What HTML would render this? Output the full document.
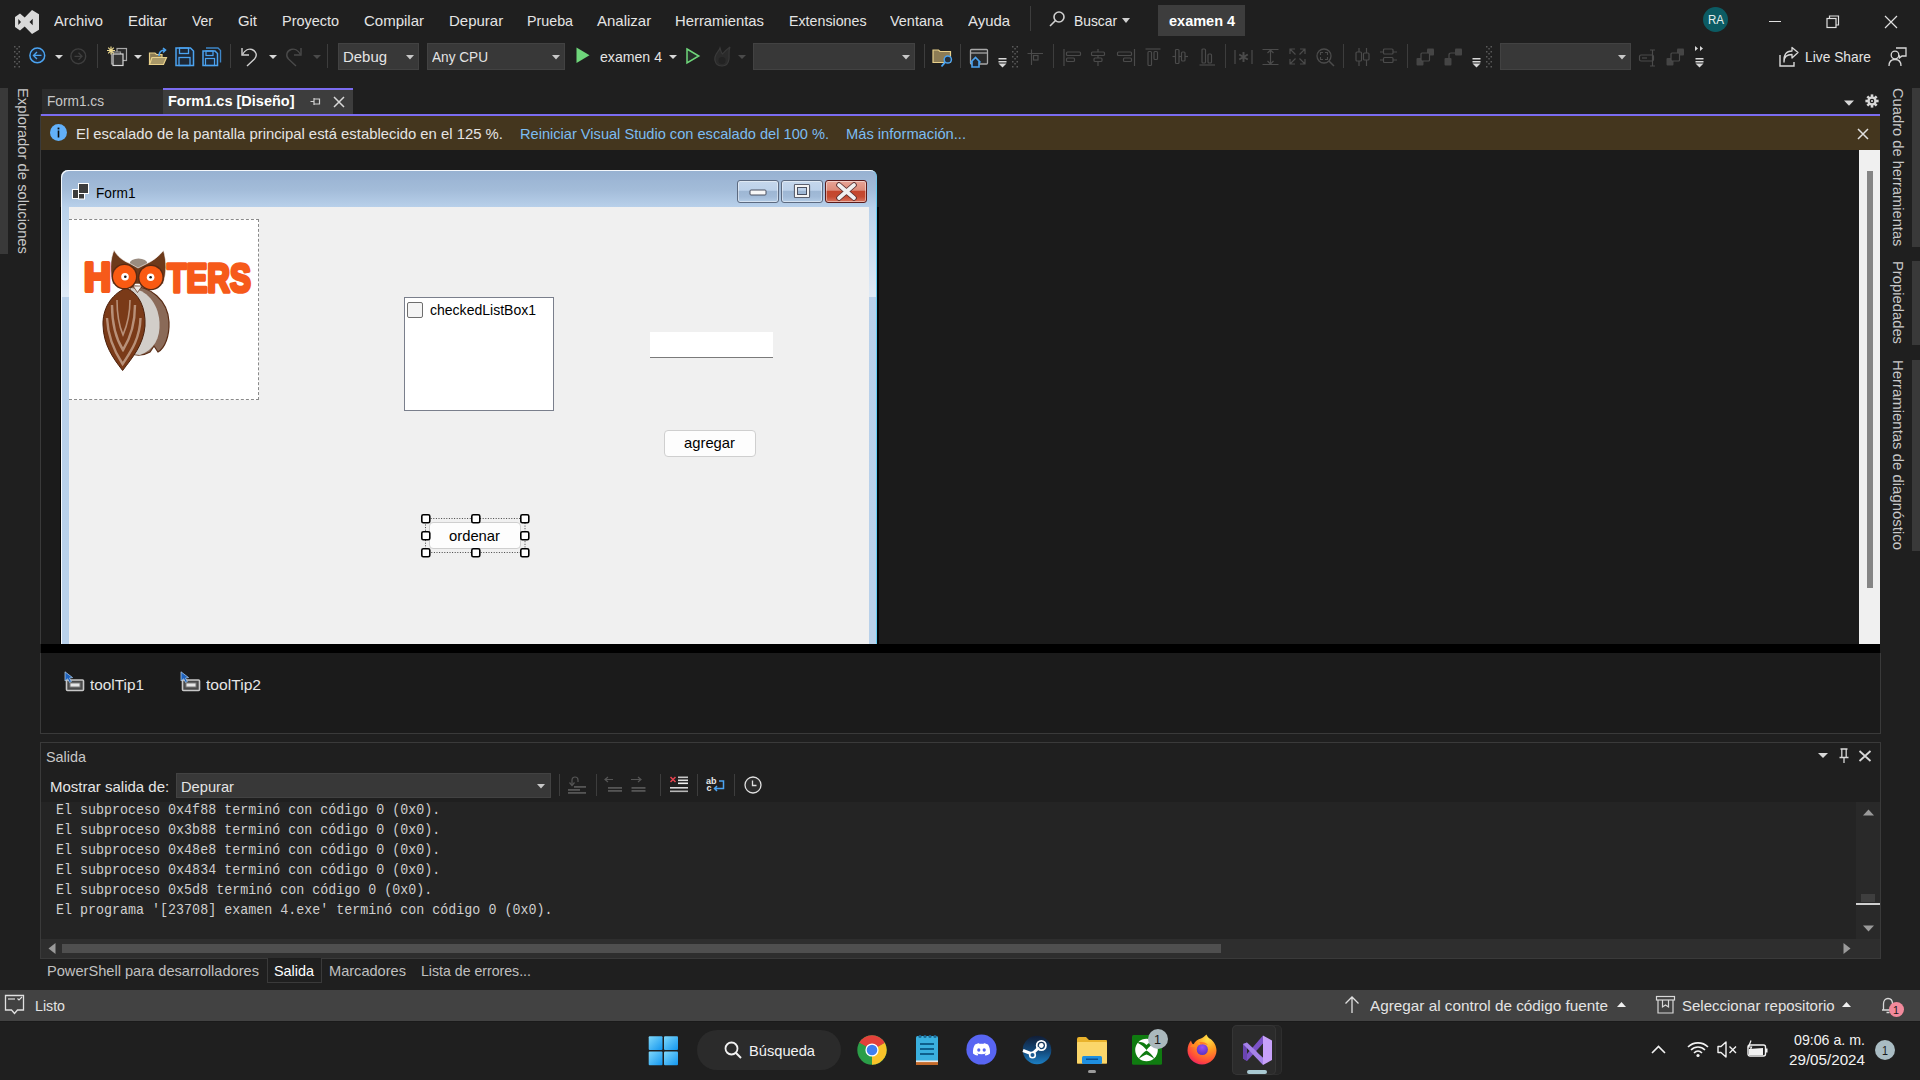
<!DOCTYPE html>
<html><head><meta charset="utf-8"><title>Visual Studio</title>
<style>
html,body{margin:0;padding:0;}
body{width:1920px;height:1080px;overflow:hidden;position:relative;background:#1f1f1f;font-family:"Liberation Sans", sans-serif;}
.t{position:absolute;white-space:pre;transform-origin:0 50%;}
.r{position:absolute;}
.s{position:absolute;overflow:visible;}
</style></head><body>

<svg class="s" style="left:14px;top:9px;" width="26" height="26" viewBox="0 0 26 26"><path d="M1 8 L6 4.5 L10.7 8.5 L18 1 L25 5.2 L25 20.7 L18 25 L10.7 17.6 L6 21.5 L1 18 Z M4.3 10 L7 13 L4.3 16 Z M18.7 9.8 L15.5 13 L18.7 16.2 Z" fill="#d9d9d9" fill-rule="evenodd"/></svg>
<div class="t" style="left:54.00px;top:10.80px;font-size:15.00px;line-height:20px;color:#e4e4e4;transform:scaleX(0.9797);">Archivo</div>
<div class="t" style="left:128.00px;top:10.80px;font-size:15.00px;line-height:20px;color:#e4e4e4;transform:scaleX(0.9952);">Editar</div>
<div class="t" style="left:192.00px;top:10.80px;font-size:15.00px;line-height:20px;color:#e4e4e4;transform:scaleX(0.9327);">Ver</div>
<div class="t" style="left:238.00px;top:10.80px;font-size:15.00px;line-height:20px;color:#e4e4e4;transform:scaleX(0.9910);">Git</div>
<div class="t" style="left:282.00px;top:10.80px;font-size:15.00px;line-height:20px;color:#e4e4e4;transform:scaleX(0.9628);">Proyecto</div>
<div class="t" style="left:364.00px;top:10.80px;font-size:15.00px;line-height:20px;color:#e4e4e4;">Compilar</div>
<div class="t" style="left:449.00px;top:10.80px;font-size:15.00px;line-height:20px;color:#e4e4e4;">Depurar</div>
<div class="t" style="left:527.00px;top:10.80px;font-size:15.00px;line-height:20px;color:#e4e4e4;transform:scaleX(0.9509);">Prueba</div>
<div class="t" style="left:597.00px;top:10.80px;font-size:15.00px;line-height:20px;color:#e4e4e4;">Analizar</div>
<div class="t" style="left:675.00px;top:10.80px;font-size:15.00px;line-height:20px;color:#e4e4e4;transform:scaleX(0.9884);">Herramientas</div>
<div class="t" style="left:789.00px;top:10.80px;font-size:15.00px;line-height:20px;color:#e4e4e4;transform:scaleX(0.9484);">Extensiones</div>
<div class="t" style="left:890.00px;top:10.80px;font-size:15.00px;line-height:20px;color:#e4e4e4;transform:scaleX(0.9625);">Ventana</div>
<div class="t" style="left:968.00px;top:10.80px;font-size:15.00px;line-height:20px;color:#e4e4e4;transform:scaleX(0.9937);">Ayuda</div>
<div class="r" style="left:1030px;top:6px;width:1px;height:25px;background:#3d3d3d;"></div>
<svg class="s" style="left:1049px;top:11px;" width="17" height="16" viewBox="0 0 17 16"><circle cx="10" cy="6" r="5" fill="none" stroke="#d0d0d0" stroke-width="1.6"/><path d="M6.5 9.5 L1 15" stroke="#d0d0d0" stroke-width="1.6"/></svg>
<div class="t" style="left:1074.00px;top:10.80px;font-size:15.00px;line-height:20px;color:#e8e8e8;transform:scaleX(0.9210);">Buscar</div>
<svg class="s" style="left:1122px;top:18px;" width="8" height="5" viewBox="0 0 8 5"><path d="M0 0 H8 L4 5 Z" fill="#d0d0d0"/></svg>
<div class="r" style="left:1158px;top:5px;width:87px;height:31px;background:#3d3d3d;"></div>
<div class="t" style="left:1169.00px;top:12.48px;font-size:14.50px;line-height:19px;color:#ffffff;font-weight:bold;">examen 4</div>
<div class="r" style="left:1703px;top:7px;width:25px;height:25px;border-radius:50%;background:#0c5b63;"></div>
<div class="t" style="left:1708.00px;top:11.84px;font-size:12.00px;line-height:16px;color:#e6f0f0;transform:scaleX(0.9597);">RA</div>
<div class="r" style="left:1769px;top:21px;width:12px;height:1px;background:#e0e0e0;"></div>
<svg class="s" style="left:1826px;top:15px;" width="14" height="14" viewBox="0 0 14 14"><rect x="1" y="3.5" width="9" height="9" fill="none" stroke="#e0e0e0" stroke-width="1.2"/><path d="M3.5 3.5 V1 H12.5 V10 H10" fill="none" stroke="#e0e0e0" stroke-width="1.2"/></svg>
<svg class="s" style="left:1884px;top:15px;" width="14" height="14" viewBox="0 0 14 14"><path d="M1 1 L13 13 M13 1 L1 13" stroke="#e0e0e0" stroke-width="1.2"/></svg>
<svg class="s" style="left:14px;top:46px;" width="7" height="22" viewBox="0 0 7 22"><rect x="0" y="0" width="1.5" height="1.5" fill="#5a5a5a"/><rect x="4.5" y="0" width="1.5" height="1.5" fill="#5a5a5a"/><rect x="2.3" y="2" width="1.5" height="1.5" fill="#5a5a5a"/><rect x="0" y="5" width="1.5" height="1.5" fill="#5a5a5a"/><rect x="4.5" y="5" width="1.5" height="1.5" fill="#5a5a5a"/><rect x="2.3" y="7" width="1.5" height="1.5" fill="#5a5a5a"/><rect x="0" y="10" width="1.5" height="1.5" fill="#5a5a5a"/><rect x="4.5" y="10" width="1.5" height="1.5" fill="#5a5a5a"/><rect x="2.3" y="12" width="1.5" height="1.5" fill="#5a5a5a"/><rect x="0" y="15" width="1.5" height="1.5" fill="#5a5a5a"/><rect x="4.5" y="15" width="1.5" height="1.5" fill="#5a5a5a"/><rect x="2.3" y="17" width="1.5" height="1.5" fill="#5a5a5a"/><rect x="0" y="20" width="1.5" height="1.5" fill="#5a5a5a"/><rect x="4.5" y="20" width="1.5" height="1.5" fill="#5a5a5a"/></svg>
<svg class="s" style="left:29px;top:47px;" width="17" height="17" viewBox="0 0 17 17"><circle cx="8.3" cy="8.4" r="7.4" fill="#1d2735" stroke="#4ba3f0" stroke-width="1.5"/><path d="M12.5 8.4 H4.5 M8 4.9 L4.5 8.4 L8 11.9" fill="none" stroke="#4ba3f0" stroke-width="1.4"/></svg>
<svg class="s" style="left:55px;top:55px;" width="8" height="4" viewBox="0 0 8 4"><path d="M0 0 H8 L4 4 Z" fill="#d8d8d8"/></svg>
<svg class="s" style="left:70px;top:48px;" width="17" height="17" viewBox="0 0 17 17"><circle cx="8.3" cy="8.3" r="7.4" fill="none" stroke="#3e3e3e" stroke-width="1.4"/><path d="M4.5 8.3 H12 M8.5 4.8 L12 8.3 L8.5 11.8" fill="none" stroke="#3e3e3e" stroke-width="1.3"/></svg>
<div class="r" style="left:97px;top:44px;width:1px;height:24px;background:#3d3d3d;"></div>
<svg class="s" style="left:106px;top:46px;" width="22" height="21" viewBox="0 0 22 21"><rect x="11" y="2.5" width="9.5" height="12" fill="#2a2a2a" stroke="#a8a8a8" stroke-width="1.2"/><rect x="5.5" y="6" width="9" height="12" fill="#2a2a2a" stroke="#909090" stroke-width="1.2"/><rect x="7" y="8" width="10" height="11.5" fill="#333" stroke="#d8d8d8" stroke-width="1.2"/><path d="M5 0.5 V8.5 M1 4.5 H9 M2.2 1.7 L7.8 7.3 M7.8 1.7 L2.2 7.3" stroke="#ecd98f" stroke-width="1.2"/></svg>
<svg class="s" style="left:134px;top:55px;" width="8" height="4" viewBox="0 0 8 4"><path d="M0 0 H8 L4 4 Z" fill="#d8d8d8"/></svg>
<svg class="s" style="left:148px;top:47px;" width="20" height="19" viewBox="0 0 20 19"><path d="M1.5 6 H7 L8.5 7.5 H14 V17.5 H1.5 Z" fill="#8c7c55" stroke="#e8d08a" stroke-width="1.2"/><path d="M1.5 17.5 L4 10.5 H18.5 L15.5 17.5 Z" fill="#a99868" stroke="#e8d08a" stroke-width="1.2"/><path d="M11 9 C11 5 13 3 17 3 M15 1 L17.5 3 L15 5.5" fill="none" stroke="#4ba3f0" stroke-width="1.6"/></svg>
<svg class="s" style="left:175px;top:47px;" width="20" height="20" viewBox="0 0 20 20"><path d="M1 1 H15.5 L18.5 4 V18.5 H1 Z" fill="#1d2735" stroke="#4ba3f0" stroke-width="1.5"/><rect x="4.5" y="1" width="9" height="5.5" fill="none" stroke="#4ba3f0" stroke-width="1.3"/><rect x="4" y="10.5" width="11" height="8" fill="none" stroke="#4ba3f0" stroke-width="1.3"/></svg>
<svg class="s" style="left:202px;top:47px;" width="20" height="20" viewBox="0 0 20 20"><path d="M4 1 H16 L18.5 3.5 V15.5" fill="none" stroke="#3e86c8" stroke-width="1.4"/><path d="M1 4 H13 L15.5 6.5 V18.5 H1 Z" fill="#1d2735" stroke="#4ba3f0" stroke-width="1.5"/><rect x="4" y="4" width="7" height="4.5" fill="none" stroke="#4ba3f0" stroke-width="1.2"/><rect x="3.5" y="11.5" width="9" height="7" fill="none" stroke="#4ba3f0" stroke-width="1.2"/></svg>
<div class="r" style="left:230px;top:44px;width:1px;height:24px;background:#3d3d3d;"></div>
<svg class="s" style="left:240px;top:46px;" width="18" height="20" viewBox="0 0 18 20"><path d="M2 2 V9 H9" fill="none" stroke="#d0d0d0" stroke-width="1.4"/><path d="M2.5 8.5 C5 4 9 2.5 12 3.5 C16.5 5 17.5 10 14.5 13 L7 20" fill="none" stroke="#d0d0d0" stroke-width="1.4"/></svg>
<svg class="s" style="left:269px;top:55px;" width="8" height="4" viewBox="0 0 8 4"><path d="M0 0 H8 L4 4 Z" fill="#d8d8d8"/></svg>
<svg class="s" style="left:285px;top:46px;" width="18" height="20" viewBox="0 0 18 20"><path d="M16 2 V9 H9" fill="none" stroke="#4a4a4a" stroke-width="1.4"/><path d="M15.5 8.5 C13 4 9 2.5 6 3.5 C1.5 5 0.5 10 3.5 13 L11 20" fill="none" stroke="#4a4a4a" stroke-width="1.4"/></svg>
<svg class="s" style="left:313px;top:55px;" width="8" height="4" viewBox="0 0 8 4"><path d="M0 0 H8 L4 4 Z" fill="#4a4a4a"/></svg>
<div class="r" style="left:327px;top:44px;width:1px;height:24px;background:#3d3d3d;"></div>
<div class="r" style="left:338px;top:43px;width:81px;height:27px;background:#383838;box-sizing:border-box;border:1px solid #424242;"></div>
<div class="t" style="left:343.00px;top:46.80px;font-size:15.00px;line-height:20px;color:#e4e4e4;transform:scaleX(0.9954);">Debug</div>
<svg class="s" style="left:406px;top:54.5px;" width="8" height="4.5" viewBox="0 0 8 4.5"><path d="M0 0 H8 L4 4.5 Z" fill="#c8c8c8"/></svg>
<div class="r" style="left:427px;top:43px;width:138px;height:27px;background:#383838;box-sizing:border-box;border:1px solid #424242;"></div>
<div class="t" style="left:432.00px;top:46.80px;font-size:15.00px;line-height:20px;color:#e4e4e4;transform:scaleX(0.9080);">Any CPU</div>
<svg class="s" style="left:552px;top:54.5px;" width="8" height="4.5" viewBox="0 0 8 4.5"><path d="M0 0 H8 L4 4.5 Z" fill="#c8c8c8"/></svg>
<svg class="s" style="left:576px;top:47px;" width="14" height="17" viewBox="0 0 14 17"><path d="M0.5 0.5 L13.5 8.2 L0.5 16 Z" fill="#6fd67b"/></svg>
<div class="t" style="left:600.00px;top:46.80px;font-size:15.00px;line-height:20px;color:#e4e4e4;transform:scaleX(0.9410);">examen 4</div>
<svg class="s" style="left:669px;top:55px;" width="8" height="4" viewBox="0 0 8 4"><path d="M0 0 H8 L4 4 Z" fill="#d8d8d8"/></svg>
<svg class="s" style="left:686px;top:48px;" width="14" height="17" viewBox="0 0 14 17"><path d="M1 1 L12.8 8 L1 15 Z" fill="#25302a" stroke="#6fd67b" stroke-width="1.5"/></svg>
<svg class="s" style="left:713px;top:46px;" width="18" height="21" viewBox="0 0 18 21"><path d="M9 20 C3 20 1 15 2 11 C3 7 6 5 7 2 C8 5 8 7 9.5 8 C11 6 13 4 17 1 C15 5 16.5 9 16 13 C15.5 17 13 20 9 20 Z" fill="#2b2b2b" stroke="#393939" stroke-width="1.2"/><circle cx="9" cy="14.5" r="3.5" fill="#232323"/></svg>
<svg class="s" style="left:738px;top:55px;" width="8" height="4" viewBox="0 0 8 4"><path d="M0 0 H8 L4 4 Z" fill="#4a4a4a"/></svg>
<div class="r" style="left:753px;top:43px;width:162px;height:27px;background:#383838;box-sizing:border-box;border:1px solid #424242;"></div>
<svg class="s" style="left:902px;top:54.5px;" width="8" height="4.5" viewBox="0 0 8 4.5"><path d="M0 0 H8 L4 4.5 Z" fill="#c8c8c8"/></svg>
<div class="r" style="left:924px;top:44px;width:1px;height:24px;background:#3d3d3d;"></div>
<svg class="s" style="left:932px;top:48px;" width="22" height="20" viewBox="0 0 22 20"><path d="M1 2 H6.5 L8 3.5 H18.5 V14.5 H1 Z" fill="#8c7c55" stroke="#e8d08a" stroke-width="1.2"/><circle cx="15.8" cy="11.5" r="3.6" fill="#23303d" stroke="#4ba3f0" stroke-width="1.5"/><path d="M13.2 14.2 L9.5 18.5" stroke="#4ba3f0" stroke-width="1.8"/></svg>
<div class="r" style="left:960px;top:44px;width:1px;height:24px;background:#3d3d3d;"></div>
<svg class="s" style="left:969px;top:48px;" width="21" height="20" viewBox="0 0 21 20"><rect x="1.5" y="1.5" width="17" height="14.5" rx="1" fill="#2a2a2a" stroke="#a8a8a8" stroke-width="1.3"/><path d="M1.5 5 H18.5" stroke="#a8a8a8" stroke-width="1.3"/><path d="M1.5 14.5 L6.5 9.5 L11.5 14.5 M3 13.5 V19 H10 V13.5" fill="#1d2735" stroke="#4ba3f0" stroke-width="1.6"/></svg>
<svg class="s" style="left:998px;top:58px;" width="10" height="10" viewBox="0 0 10 10"><rect x="0.5" y="0" width="8" height="1.5" fill="#d8d8d8"/><rect x="0.5" y="3" width="8" height="1.5" fill="#d8d8d8"/><path d="M0.5 5.5 H8.5 L4.5 9.5 Z" fill="#d8d8d8"/></svg>
<svg class="s" style="left:1012px;top:46px;" width="7" height="22" viewBox="0 0 7 22"><rect x="0" y="0" width="1.5" height="1.5" fill="#5a5a5a"/><rect x="4.5" y="0" width="1.5" height="1.5" fill="#5a5a5a"/><rect x="2.3" y="2" width="1.5" height="1.5" fill="#5a5a5a"/><rect x="0" y="5" width="1.5" height="1.5" fill="#5a5a5a"/><rect x="4.5" y="5" width="1.5" height="1.5" fill="#5a5a5a"/><rect x="2.3" y="7" width="1.5" height="1.5" fill="#5a5a5a"/><rect x="0" y="10" width="1.5" height="1.5" fill="#5a5a5a"/><rect x="4.5" y="10" width="1.5" height="1.5" fill="#5a5a5a"/><rect x="2.3" y="12" width="1.5" height="1.5" fill="#5a5a5a"/><rect x="0" y="15" width="1.5" height="1.5" fill="#5a5a5a"/><rect x="4.5" y="15" width="1.5" height="1.5" fill="#5a5a5a"/><rect x="2.3" y="17" width="1.5" height="1.5" fill="#5a5a5a"/><rect x="0" y="20" width="1.5" height="1.5" fill="#5a5a5a"/><rect x="4.5" y="20" width="1.5" height="1.5" fill="#5a5a5a"/></svg>
<svg class="s" style="left:1027px;top:49px;" width="17" height="17" viewBox="0 0 17 17"><path d="M0.5 4.5 H16 M4.5 0.5 V16" stroke="#4b4b4b" stroke-width="1.2"/><rect x="6.5" y="6.5" width="4.5" height="4.5" fill="none" stroke="#4b4b4b" stroke-width="1.2"/></svg>
<div class="r" style="left:1053px;top:44px;width:1px;height:24px;background:#3d3d3d;"></div>
<svg class="s" style="left:1063px;top:48px;" width="19" height="19" viewBox="0 0 19 19"><path d="M1 1 V18" stroke="#4b4b4b" stroke-width="1.2"/><rect x="3.5" y="4" width="14" height="3.5" rx="1" fill="none" stroke="#4b4b4b" stroke-width="1.2"/><rect x="3.5" y="10" width="8" height="3.5" rx="1" fill="none" stroke="#4b4b4b" stroke-width="1.2"/></svg>
<svg class="s" style="left:1091px;top:48px;" width="19" height="19" viewBox="0 0 19 19"><path d="M7 1 V18" stroke="#4b4b4b" stroke-width="1.2"/><rect x="0.5" y="4" width="13" height="3.5" rx="1" fill="#1f1f1f" stroke="#4b4b4b" stroke-width="1.2"/><rect x="3" y="10" width="8" height="3.5" rx="1" fill="#1f1f1f" stroke="#4b4b4b" stroke-width="1.2"/></svg>
<svg class="s" style="left:1117px;top:48px;" width="19" height="19" viewBox="0 0 19 19"><path d="M17.5 1 V18" stroke="#4b4b4b" stroke-width="1.2"/><rect x="0.5" y="4" width="14" height="3.5" rx="1" fill="none" stroke="#4b4b4b" stroke-width="1.2"/><rect x="6.5" y="10" width="8" height="3.5" rx="1" fill="none" stroke="#4b4b4b" stroke-width="1.2"/></svg>
<svg class="s" style="left:1145px;top:48px;" width="19" height="19" viewBox="0 0 19 19"><path d="M0.5 1 H15.5" stroke="#4b4b4b" stroke-width="1.2"/><rect x="3" y="3.5" width="3.5" height="14" rx="1" fill="none" stroke="#4b4b4b" stroke-width="1.2"/><rect x="9" y="3.5" width="3.5" height="8" rx="1" fill="none" stroke="#4b4b4b" stroke-width="1.2"/></svg>
<svg class="s" style="left:1172px;top:48px;" width="19" height="19" viewBox="0 0 19 19"><path d="M0.5 8.5 H16" stroke="#4b4b4b" stroke-width="1.2"/><rect x="3.5" y="1.5" width="3.5" height="14" rx="1" fill="#1f1f1f" stroke="#4b4b4b" stroke-width="1.2"/><rect x="9.5" y="4" width="3.5" height="9" rx="1" fill="#1f1f1f" stroke="#4b4b4b" stroke-width="1.2"/></svg>
<svg class="s" style="left:1199px;top:48px;" width="19" height="19" viewBox="0 0 19 19"><path d="M0.5 17 H16" stroke="#4b4b4b" stroke-width="1.2"/><rect x="3" y="1" width="3.5" height="14" rx="1" fill="none" stroke="#4b4b4b" stroke-width="1.2"/><rect x="9" y="6" width="3.5" height="9" rx="1" fill="none" stroke="#4b4b4b" stroke-width="1.2"/></svg>
<div class="r" style="left:1225px;top:44px;width:1px;height:24px;background:#3d3d3d;"></div>
<svg class="s" style="left:1234px;top:48px;" width="19" height="19" viewBox="0 0 19 19"><path d="M1 2 V16 M18 2 V16" stroke="#4b4b4b" stroke-width="1.2"/><path d="M9.5 4 V14 M5.2 6.5 L13.8 11.5 M13.8 6.5 L5.2 11.5" stroke="#4b4b4b" stroke-width="2"/></svg>
<svg class="s" style="left:1262px;top:48px;" width="19" height="19" viewBox="0 0 19 19"><path d="M0.5 1.5 H16.5 M0.5 16.5 H16.5 M8.5 2 V16 M5.5 5 L8.5 2 L11.5 5 M5.5 13 L8.5 16 L11.5 13" fill="none" stroke="#4b4b4b" stroke-width="1.2"/></svg>
<svg class="s" style="left:1289px;top:48px;" width="19" height="19" viewBox="0 0 19 19"><path d="M1 6 V1 H6 M1 1 L6.5 6.5 M16 6 V1 H11 M16 1 L10.5 6.5 M1 11 V16 H6 M1 16 L6.5 10.5 M16 11 V16 H11 M16 16 L10.5 10.5" fill="none" stroke="#4b4b4b" stroke-width="1.2"/></svg>
<svg class="s" style="left:1316px;top:48px;" width="19" height="19" viewBox="0 0 19 19"><circle cx="8" cy="8" r="7" fill="none" stroke="#4b4b4b" stroke-width="1.3"/><path d="M13 13 L18 18" stroke="#4b4b4b" stroke-width="1.5"/><path d="M4.5 7 V4.5 H7 M9 4.5 H11.5 V7 M11.5 9 V11.5 H9 M7 11.5 H4.5 V9" fill="none" stroke="#4b4b4b" stroke-width="1.1"/></svg>
<div class="r" style="left:1343px;top:44px;width:1px;height:24px;background:#3d3d3d;"></div>
<svg class="s" style="left:1355px;top:48px;" width="19" height="19" viewBox="0 0 19 19"><path d="M4 0 V18 M11.5 0 V18" stroke="#4b4b4b" stroke-width="1.2"/><rect x="1" y="4" width="5.5" height="9" rx="1" fill="#1f1f1f" stroke="#4b4b4b" stroke-width="1.2"/><rect x="8.5" y="5" width="5.5" height="7" rx="1" fill="#1f1f1f" stroke="#4b4b4b" stroke-width="1.2"/></svg>
<svg class="s" style="left:1380px;top:48px;" width="19" height="19" viewBox="0 0 19 19"><path d="M0 4 H17 M0 12 H17" stroke="#4b4b4b" stroke-width="1.2"/><rect x="3.5" y="1" width="9.5" height="5" rx="1" fill="#1f1f1f" stroke="#4b4b4b" stroke-width="1.2"/><rect x="3.5" y="9.5" width="9.5" height="5" rx="1" fill="#1f1f1f" stroke="#4b4b4b" stroke-width="1.2"/></svg>
<div class="r" style="left:1407px;top:44px;width:1px;height:24px;background:#3d3d3d;"></div>
<svg class="s" style="left:1416px;top:48px;" width="19" height="19" viewBox="0 0 19 19"><rect x="0.5" y="10" width="7" height="7.5" rx="1" fill="#454545"/><rect x="11" y="0.5" width="7" height="7" rx="1" fill="#454545"/><rect x="5" y="5" width="8.5" height="8" rx="1" fill="#1f1f1f" stroke="#4b4b4b" stroke-width="1.2"/></svg>
<svg class="s" style="left:1444px;top:48px;" width="19" height="19" viewBox="0 0 19 19"><rect x="0.5" y="10" width="7" height="7.5" rx="1" fill="#454545"/><rect x="11" y="0.5" width="7" height="7" rx="1" fill="#454545"/><path d="M5 10 V7 Q5 5 7 5 H11" fill="none" stroke="#4b4b4b" stroke-width="1.2"/></svg>
<svg class="s" style="left:1472px;top:58px;" width="10" height="10" viewBox="0 0 10 10"><rect x="0.5" y="0" width="8" height="1.5" fill="#d8d8d8"/><rect x="0.5" y="3" width="8" height="1.5" fill="#d8d8d8"/><path d="M0.5 5.5 H8.5 L4.5 9.5 Z" fill="#d8d8d8"/></svg>
<svg class="s" style="left:1486px;top:46px;" width="7" height="22" viewBox="0 0 7 22"><rect x="0" y="0" width="1.5" height="1.5" fill="#5a5a5a"/><rect x="4.5" y="0" width="1.5" height="1.5" fill="#5a5a5a"/><rect x="2.3" y="2" width="1.5" height="1.5" fill="#5a5a5a"/><rect x="0" y="5" width="1.5" height="1.5" fill="#5a5a5a"/><rect x="4.5" y="5" width="1.5" height="1.5" fill="#5a5a5a"/><rect x="2.3" y="7" width="1.5" height="1.5" fill="#5a5a5a"/><rect x="0" y="10" width="1.5" height="1.5" fill="#5a5a5a"/><rect x="4.5" y="10" width="1.5" height="1.5" fill="#5a5a5a"/><rect x="2.3" y="12" width="1.5" height="1.5" fill="#5a5a5a"/><rect x="0" y="15" width="1.5" height="1.5" fill="#5a5a5a"/><rect x="4.5" y="15" width="1.5" height="1.5" fill="#5a5a5a"/><rect x="2.3" y="17" width="1.5" height="1.5" fill="#5a5a5a"/><rect x="0" y="20" width="1.5" height="1.5" fill="#5a5a5a"/><rect x="4.5" y="20" width="1.5" height="1.5" fill="#5a5a5a"/></svg>
<div class="r" style="left:1500px;top:43px;width:131px;height:27px;background:#383838;box-sizing:border-box;border:1px solid #424242;"></div>
<svg class="s" style="left:1618px;top:54.5px;" width="8" height="4.5" viewBox="0 0 8 4.5"><path d="M0 0 H8 L4 4.5 Z" fill="#c8c8c8"/></svg>
<svg class="s" style="left:1639px;top:48px;" width="19" height="19" viewBox="0 0 19 19"><rect x="0.5" y="7" width="14" height="6" rx="1.5" fill="none" stroke="#4b4b4b" stroke-width="1.2"/><path d="M3 10 H8" stroke="#4b4b4b" stroke-width="1.2"/><path d="M11 2 H16 M11 18 H16 M13.5 2 V18" stroke="#4b4b4b" stroke-width="1.2"/></svg>
<svg class="s" style="left:1666px;top:48px;" width="19" height="19" viewBox="0 0 19 19"><rect x="0.5" y="10" width="7" height="7.5" rx="1" fill="#454545"/><rect x="11" y="0.5" width="7" height="7" rx="1" fill="#454545"/><rect x="5" y="5" width="8.5" height="8" rx="1" fill="#1f1f1f" stroke="#4b4b4b" stroke-width="1.2"/></svg>
<svg class="s" style="left:1695px;top:46px;" width="9" height="5" viewBox="0 0 9 5"><path d="M0 0 L3 2.5 L0 5 Z M5 0 L8 2.5 L5 5 Z" fill="#d8d8d8"/></svg>
<svg class="s" style="left:1695px;top:58px;" width="10" height="10" viewBox="0 0 10 10"><rect x="0.5" y="0" width="8" height="1.5" fill="#d8d8d8"/><rect x="0.5" y="3" width="8" height="1.5" fill="#d8d8d8"/><path d="M0.5 5.5 H8.5 L4.5 9.5 Z" fill="#d8d8d8"/></svg>
<svg class="s" style="left:1779px;top:48px;" width="20" height="19" viewBox="0 0 20 19"><path d="M1 7 V18 H15 V14" fill="none" stroke="#d8d8d8" stroke-width="1.4"/><path d="M5 14 C5 9 8 6.5 13 6.5 V10 L19 4.5 L13 -0.5 V3 C7 3 4.5 7 5 14 Z" fill="none" stroke="#d8d8d8" stroke-width="1.3" stroke-linejoin="round"/></svg>
<div class="t" style="left:1805.00px;top:46.80px;font-size:15.00px;line-height:20px;color:#e4e4e4;transform:scaleX(0.9203);">Live Share</div>
<svg class="s" style="left:1888px;top:47px;" width="19" height="20" viewBox="0 0 19 20"><circle cx="7" cy="8" r="3.8" fill="none" stroke="#d8d8d8" stroke-width="1.3"/><path d="M1 19 C1 14 3.5 12.5 7 12.5 C10.5 12.5 13 14 13 19" fill="none" stroke="#d8d8d8" stroke-width="1.3"/><path d="M8 1 H18 V9 H14 L11.5 11 V9 H10" fill="none" stroke="#d8d8d8" stroke-width="1.3"/></svg>
<div class="r" style="left:0px;top:88px;width:8px;height:166px;background:#393939;"></div>
<div class="t" style="left:33.00px;top:88.00px;font-size:15.00px;line-height:20px;color:#c8c8c8;transform-origin:0 0;transform:rotate(90deg) scaleX(0.9854);">Explorador de soluciones</div>
<div class="r" style="left:1880px;top:88px;width:40px;height:904px;background:#1f1f1f;"></div>
<div class="r" style="left:1912px;top:88px;width:8px;height:159px;background:#393939;"></div>
<div class="r" style="left:1912px;top:261px;width:8px;height:84px;background:#393939;"></div>
<div class="r" style="left:1912px;top:360px;width:8px;height:191px;background:#393939;"></div>
<div class="t" style="left:1907.70px;top:88.00px;font-size:15.00px;line-height:20px;color:#c8c8c8;transform-origin:0 0;transform:rotate(90deg) scaleX(0.9796);">Cuadro de herramientas</div>
<div class="t" style="left:1907.70px;top:261.00px;font-size:15.00px;line-height:20px;color:#c8c8c8;transform-origin:0 0;transform:rotate(90deg) scaleX(0.9853);">Propiedades</div>
<div class="t" style="left:1907.70px;top:360.00px;font-size:15.00px;line-height:20px;color:#c8c8c8;transform-origin:0 0;transform:rotate(90deg) scaleX(0.9949);">Herramientas de diagnóstico</div>
<div class="r" style="left:42px;top:89px;width:121px;height:25px;background:#2b2b2b;"></div>
<div class="t" style="left:47.00px;top:90.80px;font-size:15.00px;line-height:20px;color:#c8c8c8;transform:scaleX(0.9118);">Form1.cs</div>
<div class="r" style="left:163px;top:88px;width:190px;height:26px;background:#3d3d3d;"></div>
<div class="r" style="left:163px;top:88px;width:190px;height:2px;background:#7b6cf0;"></div>
<div class="t" style="left:168.00px;top:92.48px;font-size:14.50px;line-height:19px;color:#ffffff;font-weight:bold;">Form1.cs [Diseño]</div>
<svg class="s" style="left:310px;top:96px;" width="11" height="11" viewBox="0 0 11 11"><path d="M0.5 5.5 H4 M4 2 V9 M4 3 H9.5 V8 H4" fill="none" stroke="#d0d0d0" stroke-width="1.2"/></svg>
<svg class="s" style="left:333px;top:96px;" width="12" height="12" viewBox="0 0 12 12"><path d="M1 1 L11 11 M11 1 L1 11" stroke="#d8d8d8" stroke-width="1.5"/></svg>
<svg class="s" style="left:1844px;top:100px;" width="10" height="6" viewBox="0 0 10 6"><path d="M0 0.5 H10 L5 5.8 Z" fill="#d8d8d8"/></svg>
<svg class="s" style="left:1865px;top:94px;" width="14" height="14" viewBox="0 0 14 14"><g transform="translate(7 7)"><circle r="4.6" fill="#d8d8d8"/><rect x="-1.3" y="-6.6" width="2.6" height="3" fill="#d8d8d8" transform="rotate(0)"/><rect x="-1.3" y="-6.6" width="2.6" height="3" fill="#d8d8d8" transform="rotate(45)"/><rect x="-1.3" y="-6.6" width="2.6" height="3" fill="#d8d8d8" transform="rotate(90)"/><rect x="-1.3" y="-6.6" width="2.6" height="3" fill="#d8d8d8" transform="rotate(135)"/><rect x="-1.3" y="-6.6" width="2.6" height="3" fill="#d8d8d8" transform="rotate(180)"/><rect x="-1.3" y="-6.6" width="2.6" height="3" fill="#d8d8d8" transform="rotate(225)"/><rect x="-1.3" y="-6.6" width="2.6" height="3" fill="#d8d8d8" transform="rotate(270)"/><rect x="-1.3" y="-6.6" width="2.6" height="3" fill="#d8d8d8" transform="rotate(315)"/><circle r="2.3" fill="#1f1f1f"/><circle r="1.1" fill="#d8d8d8"/></g></svg>
<div class="r" style="left:41px;top:114px;width:1839px;height:2px;background:#7b6cf0;"></div>
<div class="r" style="left:41px;top:116px;width:1839px;height:34px;background:#44361e;"></div>
<div class="r" style="left:50px;top:124px;width:17px;height:17px;border-radius:50%;background:#62b0f8;"></div>
<svg class="s" style="left:50px;top:124px;" width="17" height="17" viewBox="0 0 17 17"><rect x="7.6" y="3.6" width="1.8" height="1.8" fill="#0a0a0a"/><rect x="7.7" y="6.5" width="1.6" height="7" fill="#0a0a0a"/></svg>
<div class="t" style="left:76.00px;top:123.80px;font-size:15.00px;line-height:20px;color:#e4e4e4;transform:scaleX(0.9903);">El escalado de la pantalla principal está establecido en el 125 %.</div>
<div class="t" style="left:520.00px;top:123.80px;font-size:15.00px;line-height:20px;color:#7cbdf2;transform:scaleX(0.9734);">Reiniciar Visual Studio con escalado del 100 %.</div>
<div class="t" style="left:846.00px;top:123.80px;font-size:15.00px;line-height:20px;color:#7cbdf2;transform:scaleX(0.9790);">Más información...</div>
<svg class="s" style="left:1857px;top:128px;" width="12" height="12" viewBox="0 0 12 12"><path d="M1 1 L11 11 M11 1 L1 11" stroke="#e0e0e0" stroke-width="1.5"/></svg>
<div class="r" style="left:40px;top:114px;width:1px;height:530px;background:#3a3a3a;"></div>
<div class="r" style="left:41px;top:150px;width:1818px;height:494px;background:#1b1b1b;"></div>
<div class="r" style="left:1859px;top:150px;width:21px;height:494px;background:#f0f0f0;"></div>
<div class="r" style="left:1867px;top:171px;width:6px;height:417px;background:#858585;"></div>
<div class="r" style="left:41px;top:644px;width:1839px;height:9px;background:#000000;"></div>
<div class="r" style="left:60px;top:207px;width:1px;height:437px;background:#050505;"></div>
<div class="r" style="left:877px;top:207px;width:2px;height:437px;background:#050505;"></div>
<div class="r" style="left:61px;top:170px;width:816px;height:474px;border-radius:7px 7px 0 0;background:linear-gradient(to bottom,#97b1d1 0px,#a3bcd9 20px,#b8d0ea 37px,#b9d1ea 100%);box-shadow:inset 1px 1px 0 #f4f8fc,inset -1px 0 0 #71c3e8;"></div>
<div class="r" style="left:69px;top:207px;width:800px;height:437px;background:#f0f0f0;"></div>
<div class="r" style="left:869px;top:207px;width:7px;height:90px;background:linear-gradient(to bottom,#b9d1ea,#dfeaf6);"></div>
<div class="r" style="left:62px;top:207px;width:7px;height:90px;background:linear-gradient(to bottom,#b9d1ea,#dfeaf6);"></div>
<div class="r" style="left:876px;top:185px;width:1px;height:459px;background:#62cdf2;"></div>
<svg class="s" style="left:72px;top:183px;" width="19" height="17" viewBox="0 0 19 17"><rect x="0.5" y="6.5" width="6" height="9" fill="#3c3c3c" stroke="#ffffff" stroke-width="1"/><rect x="6.5" y="0.5" width="10" height="10" fill="#3c3c3c" stroke="#ffffff" stroke-width="1"/><rect x="6.5" y="10.5" width="6" height="5.5" fill="#3c3c3c" stroke="#ffffff" stroke-width="1"/></svg>
<div class="t" style="left:95.50px;top:182.80px;font-size:15.00px;line-height:20px;color:#000000;transform:scaleX(0.9113);">Form1</div>
<div class="r" style="left:737px;top:180px;width:42px;height:23px;box-sizing:border-box;border:1px solid #5c6a80;border-radius:3px;background:linear-gradient(to bottom,#c5d7ec 0,#bcd1ea 45%,#9db6d3 46%,#a2bbd8 75%,#b4cce6 100%);box-shadow:inset 0 0 0 1px rgba(255,255,255,0.45);"></div>
<div class="r" style="left:781px;top:180px;width:42px;height:23px;box-sizing:border-box;border:1px solid #5c6a80;border-radius:3px;background:linear-gradient(to bottom,#c5d7ec 0,#bcd1ea 45%,#9db6d3 46%,#a2bbd8 75%,#b4cce6 100%);box-shadow:inset 0 0 0 1px rgba(255,255,255,0.45);"></div>
<div class="r" style="left:825px;top:180px;width:42px;height:23px;box-sizing:border-box;border:1px solid #5a1a1a;border-radius:3px;background:linear-gradient(to bottom,#e8a597 0,#dc8a78 45%,#c4452c 46%,#c54a30 75%,#d97560 100%);box-shadow:inset 0 0 0 1px rgba(255,255,255,0.45);"></div>
<svg class="s" style="left:749px;top:189px;" width="18" height="8" viewBox="0 0 18 8"><rect x="1" y="1" width="16" height="5" rx="1" fill="#f8f8f8" stroke="#4a5060" stroke-width="1"/></svg>
<svg class="s" style="left:793px;top:183px;" width="18" height="16" viewBox="0 0 18 16"><rect x="1.5" y="1.5" width="15" height="13" rx="1" fill="none" stroke="#4a5060" stroke-width="1.2"/><rect x="3" y="3" width="12" height="10" fill="none" stroke="#f4f4f4" stroke-width="2.2"/><rect x="4.5" y="4.5" width="9" height="7" fill="none" stroke="#4a5060" stroke-width="1"/></svg>
<svg class="s" style="left:836px;top:183px;" width="21" height="17" viewBox="0 0 21 17"><path d="M3 2 L18 15 M18 2 L3 15" stroke="#5a3030" stroke-width="5.6" stroke-linecap="round"/><path d="M3 2 L18 15 M18 2 L3 15" stroke="#f0f0f0" stroke-width="3.8" stroke-linecap="round"/></svg>
<div class="r" style="left:69px;top:219px;width:190px;height:181px;background:#ffffff;box-sizing:border-box;border:1px dashed #8a8a8a;border-left:none;"></div>
<div class="r" style="left:404px;top:297px;width:150px;height:114px;background:#ffffff;box-sizing:border-box;border:1px solid #7a7f8c;"></div>
<div class="r" style="left:407px;top:302px;width:16px;height:16px;box-sizing:border-box;border:1px solid #6e6e6e;border-radius:2px;background:#f4f4f4;"></div>
<div class="t" style="left:430.00px;top:299.80px;font-size:15.00px;line-height:20px;color:#000000;transform:scaleX(0.9347);">checkedListBox1</div>
<div class="r" style="left:650px;top:332px;width:123px;height:26px;background:#ffffff;"></div>
<div class="r" style="left:650px;top:357px;width:123px;height:1px;background:#7a7a7a;"></div>
<div class="r" style="left:664px;top:430px;width:92px;height:27px;box-sizing:border-box;border:1px solid #cfcfcf;border-radius:4px;background:#fdfdfd;"></div>
<div class="t" style="left:684.00px;top:433.30px;font-size:15.00px;line-height:20px;color:#000000;transform:scaleX(0.9861);">agregar</div>
<div class="r" style="left:429px;top:522px;width:92px;height:27px;box-sizing:border-box;border:1px solid #cfcfcf;border-radius:4px;background:#fdfdfd;"></div>
<div class="t" style="left:449.00px;top:525.80px;font-size:15.00px;line-height:20px;color:#000000;transform:scaleX(0.9861);">ordenar</div>
<svg class="s" style="left:421px;top:514px;" width="109" height="43" viewBox="0 0 109 43"><rect x="4.5" y="4.5" width="99.5" height="34" fill="none" stroke="#444" stroke-width="1" stroke-dasharray="1 1.6"/><rect x="0.8" y="0.8" width="8" height="8" rx="1.5" fill="#ffffff" stroke="#000" stroke-width="1.6"/><rect x="0.8" y="17.8" width="8" height="8" rx="1.5" fill="#ffffff" stroke="#000" stroke-width="1.6"/><rect x="0.8" y="34.8" width="8" height="8" rx="1.5" fill="#ffffff" stroke="#000" stroke-width="1.6"/><rect x="50.8" y="0.8" width="8" height="8" rx="1.5" fill="#ffffff" stroke="#000" stroke-width="1.6"/><rect x="50.8" y="34.8" width="8" height="8" rx="1.5" fill="#ffffff" stroke="#000" stroke-width="1.6"/><rect x="99.8" y="0.8" width="8" height="8" rx="1.5" fill="#ffffff" stroke="#000" stroke-width="1.6"/><rect x="99.8" y="17.8" width="8" height="8" rx="1.5" fill="#ffffff" stroke="#000" stroke-width="1.6"/><rect x="99.8" y="34.8" width="8" height="8" rx="1.5" fill="#ffffff" stroke="#000" stroke-width="1.6"/></svg>
<div class="r" style="left:40px;top:653px;width:1px;height:81px;background:#3a3a3a;"></div>
<div class="r" style="left:41px;top:653px;width:1839px;height:80px;background:#1b1b1b;"></div>
<div class="r" style="left:40px;top:733px;width:1841px;height:1px;background:#3a3a3a;"></div>
<div class="r" style="left:1880px;top:653px;width:1px;height:81px;background:#3a3a3a;"></div>
<svg class="s" style="left:64px;top:671px;" width="21" height="21" viewBox="0 0 21 21"><rect x="2.5" y="9" width="17" height="10.5" rx="1" fill="#4a4a4a" stroke="#c8c8c8" stroke-width="1.6"/><rect x="6" y="12" width="10" height="4" fill="#e6e6e6" stroke="#7a7a7a" stroke-width="1"/><path d="M1 0.8 L1 10 L3.6 7.8 L5.6 11.5 L7.4 10.5 L5.5 7 L8.6 6.6 Z" fill="#1f63bd" stroke="#b8d4f0" stroke-width="0.7"/></svg>
<div class="t" style="left:89.50px;top:674.80px;font-size:15.00px;line-height:20px;color:#e6e6e6;transform:scaleX(1.0228);">toolTip1</div>
<svg class="s" style="left:180px;top:671px;" width="21" height="21" viewBox="0 0 21 21"><rect x="2.5" y="9" width="17" height="10.5" rx="1" fill="#4a4a4a" stroke="#c8c8c8" stroke-width="1.6"/><rect x="6" y="12" width="10" height="4" fill="#e6e6e6" stroke="#7a7a7a" stroke-width="1"/><path d="M1 0.8 L1 10 L3.6 7.8 L5.6 11.5 L7.4 10.5 L5.5 7 L8.6 6.6 Z" fill="#1f63bd" stroke="#b8d4f0" stroke-width="0.7"/></svg>
<div class="t" style="left:206.00px;top:674.80px;font-size:15.00px;line-height:20px;color:#e6e6e6;transform:scaleX(1.0417);">toolTip2</div>
<div class="r" style="left:40px;top:742px;width:1841px;height:217px;background:#1f1f1f;box-sizing:border-box;border:1px solid #3a3a3a;"></div>
<div class="t" style="left:45.50px;top:746.80px;font-size:15.00px;line-height:20px;color:#c8c8c8;transform:scaleX(0.9595);">Salida</div>
<svg class="s" style="left:1818px;top:753px;" width="10" height="5" viewBox="0 0 10 5"><path d="M0 0 H10 L5 5 Z" fill="#d8d8d8"/></svg>
<svg class="s" style="left:1839px;top:748px;" width="10" height="16" viewBox="0 0 10 16"><path d="M1.5 1 H8.5 M2.8 1 V9 M7.2 1 V9 M0.5 9.5 H9.5 M5 9.5 V15" fill="none" stroke="#d8d8d8" stroke-width="1.3"/></svg>
<svg class="s" style="left:1858px;top:750px;" width="14" height="12" viewBox="0 0 14 12"><path d="M1.5 1 L12.5 11 M12.5 1 L1.5 11" stroke="#d8d8d8" stroke-width="1.8"/></svg>
<div class="t" style="left:50.00px;top:776.80px;font-size:15.00px;line-height:20px;color:#e6e6e6;">Mostrar salida de:</div>
<div class="r" style="left:176px;top:773px;width:375px;height:25px;background:#383838;box-sizing:border-box;border:1px solid #424242;"></div>
<div class="t" style="left:181.00px;top:776.80px;font-size:15.00px;line-height:20px;color:#e4e4e4;transform:scaleX(0.9778);">Depurar</div>
<svg class="s" style="left:537px;top:784px;" width="8" height="4.5" viewBox="0 0 8 4.5"><path d="M0 0 H8 L4 4.5 Z" fill="#c8c8c8"/></svg>
<div class="r" style="left:559px;top:774px;width:1px;height:22px;background:#3d3d3d;"></div>
<svg class="s" style="left:568px;top:776px;" width="20" height="18" viewBox="0 0 20 18"><path d="M4 9 V4 C4 2 5.5 1 7 1 C8.5 1 10 2 10 4 V6" fill="none" stroke="#555555" stroke-width="1.2"/><path d="M1.5 6.5 L4 9.5 L6.5 6.5" fill="none" stroke="#555555" stroke-width="1.2"/><rect x="6" y="10" width="12" height="1.8" fill="#555555"/><rect x="0" y="13" width="12" height="1.8" fill="#555555"/><rect x="0" y="16" width="18" height="1.8" fill="#555555"/></svg>
<div class="r" style="left:596px;top:774px;width:1px;height:22px;background:#3d3d3d;"></div>
<svg class="s" style="left:604px;top:777px;" width="19" height="17" viewBox="0 0 19 17"><path d="M1 2.5 H9 M4 0 L1 2.5 L4 5" fill="none" stroke="#555555" stroke-width="1.2"/><rect x="4" y="10" width="14" height="1.8" fill="#555555"/><rect x="4" y="13" width="14" height="1.8" fill="#555555"/></svg>
<svg class="s" style="left:631px;top:777px;" width="19" height="17" viewBox="0 0 19 17"><path d="M0 2.5 H10 M7 0 L10 2.5 L7 5" fill="none" stroke="#555555" stroke-width="1.2"/><rect x="0.5" y="10" width="14" height="1.8" fill="#555555"/><rect x="0.5" y="13" width="14" height="1.8" fill="#555555"/></svg>
<div class="r" style="left:660px;top:774px;width:1px;height:22px;background:#3d3d3d;"></div>
<svg class="s" style="left:670px;top:776px;" width="19" height="18" viewBox="0 0 19 18"><path d="M0.5 1 L5.5 6 M5.5 1 L0.5 6" stroke="#e8434f" stroke-width="1.5"/><rect x="8" y="0.5" width="10" height="1.6" fill="#c8c8c8"/><rect x="8" y="3.5" width="10" height="1.6" fill="#e0e0e0"/><rect x="8" y="6.5" width="10" height="1.6" fill="#f0f0f0"/><rect x="0" y="11" width="18" height="1.6" fill="#d8d8d8"/><rect x="0" y="14.5" width="18" height="1.6" fill="#b8b8b8"/></svg>
<div class="r" style="left:697px;top:774px;width:1px;height:22px;background:#3d3d3d;"></div>
<svg class="s" style="left:706px;top:776px;" width="20" height="18" viewBox="0 0 20 18"><text x="0" y="7.5" font-family="Liberation Sans" font-weight="bold" font-size="9" fill="#e8e8e8">ab</text><text x="0.5" y="15" font-family="Liberation Sans" font-weight="bold" font-size="9" fill="#e8e8e8">c</text><path d="M13 5 H17.5 V12.5 H8.5 M11 10 L8.5 12.5 L11 15" fill="none" stroke="#4ba3f0" stroke-width="1.5"/></svg>
<div class="r" style="left:734px;top:774px;width:1px;height:22px;background:#3d3d3d;"></div>
<svg class="s" style="left:744px;top:776px;" width="18" height="18" viewBox="0 0 18 18"><circle cx="9" cy="9" r="8" fill="#2c2c2c" stroke="#e0e0e0" stroke-width="1.3"/><path d="M8.5 4.5 V9.5 H12.5" fill="none" stroke="#e0e0e0" stroke-width="1.3"/></svg>
<div class="r" style="left:41px;top:802px;width:1815px;height:137px;background:#242424;"></div>
<div class="t" style="left:56.00px;top:800.61px;font-size:14.60px;line-height:19px;color:#cfcfcf;font-family:'Liberation Mono', monospace;transform:scaleX(0.9143);">El subproceso 0x4f88 terminó con código 0 (0x0).</div>
<div class="t" style="left:56.00px;top:820.61px;font-size:14.60px;line-height:19px;color:#cfcfcf;font-family:'Liberation Mono', monospace;transform:scaleX(0.9143);">El subproceso 0x3b88 terminó con código 0 (0x0).</div>
<div class="t" style="left:56.00px;top:840.61px;font-size:14.60px;line-height:19px;color:#cfcfcf;font-family:'Liberation Mono', monospace;transform:scaleX(0.9143);">El subproceso 0x48e8 terminó con código 0 (0x0).</div>
<div class="t" style="left:56.00px;top:860.61px;font-size:14.60px;line-height:19px;color:#cfcfcf;font-family:'Liberation Mono', monospace;transform:scaleX(0.9143);">El subproceso 0x4834 terminó con código 0 (0x0).</div>
<div class="t" style="left:56.00px;top:880.61px;font-size:14.60px;line-height:19px;color:#cfcfcf;font-family:'Liberation Mono', monospace;transform:scaleX(0.9143);">El subproceso 0x5d8 terminó con código 0 (0x0).</div>
<div class="t" style="left:56.00px;top:900.61px;font-size:14.60px;line-height:19px;color:#cfcfcf;font-family:'Liberation Mono', monospace;transform:scaleX(0.9143);">El programa '[23708] examen 4.exe' terminó con código 0 (0x0).</div>
<div class="r" style="left:1856px;top:802px;width:24px;height:137px;background:#292929;"></div>
<svg class="s" style="left:1863px;top:809px;" width="11" height="7" viewBox="0 0 11 7"><path d="M0 6.5 L5.5 0.5 L11 6.5 Z" fill="#9a9a9a"/></svg>
<svg class="s" style="left:1863px;top:925px;" width="11" height="7" viewBox="0 0 11 7"><path d="M0 0.5 H11 L5.5 6.5 Z" fill="#9a9a9a"/></svg>
<div class="r" style="left:1861px;top:894px;width:14px;height:8px;background:#3e3e3e;"></div>
<div class="r" style="left:1856px;top:903px;width:24px;height:2px;background:#d0d0d0;"></div>
<div class="r" style="left:41px;top:939px;width:1839px;height:19px;background:#2e2e2e;"></div>
<div class="r" style="left:62px;top:944px;width:1159px;height:9px;background:#4f4f4f;"></div>
<svg class="s" style="left:48px;top:943px;" width="8" height="11" viewBox="0 0 8 11"><path d="M7.5 0 V11 L0.5 5.5 Z" fill="#9a9a9a"/></svg>
<svg class="s" style="left:1843px;top:943px;" width="8" height="11" viewBox="0 0 8 11"><path d="M0.5 0 V11 L7.5 5.5 Z" fill="#9a9a9a"/></svg>
<div class="r" style="left:267px;top:958px;width:55px;height:25px;background:#1f1f1f;box-sizing:border-box;border:1px solid #3a3a3a;border-top:none;"></div>
<div class="t" style="left:47.00px;top:961.30px;font-size:15.00px;line-height:20px;color:#c0c0c0;transform:scaleX(0.9741);">PowerShell para desarrolladores</div>
<div class="t" style="left:274.00px;top:961.30px;font-size:15.00px;line-height:20px;color:#ffffff;transform:scaleX(0.9595);">Salida</div>
<div class="t" style="left:329.00px;top:961.30px;font-size:15.00px;line-height:20px;color:#c0c0c0;transform:scaleX(0.9720);">Marcadores</div>
<div class="t" style="left:421.00px;top:961.30px;font-size:15.00px;line-height:20px;color:#c0c0c0;transform:scaleX(0.9421);">Lista de errores...</div>
<div class="r" style="left:0px;top:990px;width:1920px;height:31px;background:#424242;"></div>
<svg class="s" style="left:4px;top:994px;" width="22" height="22" viewBox="0 0 22 22"><path d="M1.5 1.5 H19.5 V16 H13.5 L10.5 19.5 L7.5 16 H1.5 Z" fill="none" stroke="#e0e0e0" stroke-width="1.3"/><path d="M4 5 H11" stroke="#e0e0e0" stroke-width="1.2"/><path d="M13.5 4.5 L15 6 L18 3" fill="none" stroke="#e0e0e0" stroke-width="1.1"/></svg>
<div class="t" style="left:35.00px;top:995.80px;font-size:15.00px;line-height:20px;color:#e4e4e4;transform:scaleX(0.9467);">Listo</div>
<svg class="s" style="left:1344px;top:996px;" width="16" height="17" viewBox="0 0 16 17"><path d="M8 1 V17 M1.5 7.5 L8 1 L14.5 7.5" fill="none" stroke="#e0e0e0" stroke-width="1.3"/></svg>
<div class="t" style="left:1370.00px;top:995.80px;font-size:15.00px;line-height:20px;color:#e4e4e4;transform:scaleX(1.0191);">Agregar al control de código fuente</div>
<svg class="s" style="left:1617px;top:1002px;" width="9" height="5" viewBox="0 0 9 5"><path d="M0 5 L4.5 0 L9 5 Z" fill="#f0f0f0"/></svg>
<svg class="s" style="left:1656px;top:996px;" width="19" height="18" viewBox="0 0 19 18"><rect x="0.5" y="0.5" width="18" height="3.5" fill="none" stroke="#d8d8d8" stroke-width="1.2"/><path d="M2 4 V17 H17 V4" fill="none" stroke="#d8d8d8" stroke-width="1.2"/><path d="M6.5 4 V11 L9.5 9 L12.5 11 V4" fill="none" stroke="#d8d8d8" stroke-width="1.2"/></svg>
<div class="t" style="left:1682.00px;top:995.80px;font-size:15.00px;line-height:20px;color:#e4e4e4;">Seleccionar repositorio</div>
<svg class="s" style="left:1842px;top:1002px;" width="9" height="5" viewBox="0 0 9 5"><path d="M0 5 L4.5 0 L9 5 Z" fill="#f0f0f0"/></svg>
<svg class="s" style="left:1880px;top:996px;" width="16" height="18" viewBox="0 0 16 18"><path d="M2 14 H14 M3.5 14 V8 C3.5 4.5 5.5 2.5 8 2.5 C10.5 2.5 12.5 4.5 12.5 8 V14 M6.5 16.5 H9.5" fill="none" stroke="#d8d8d8" stroke-width="1.3"/></svg>
<div class="r" style="left:1889px;top:1002px;width:15px;height:15px;border-radius:50%;background:#f28a9c;"></div>
<div class="t" style="left:1893.00px;top:1003.19px;font-size:11.00px;line-height:14px;color:#1a1a1a;transform:scaleX(0.9796);">1</div>
<div class="r" style="left:0px;top:1021px;width:1920px;height:59px;background:#1f1f1f;"></div>
<div class="r" style="left:0px;top:1021px;width:1920px;height:1px;background:#1a1a1a;"></div>
<svg class="s" style="left:648px;top:1036px;" width="31" height="30" viewBox="0 0 31 30"><defs><linearGradient id="wg" x1="0" y1="0" x2="1" y2="1"><stop offset="0" stop-color="#7fd8fb"/><stop offset="1" stop-color="#1296ef"/></linearGradient></defs><rect x="0.7" y="0.2" width="13.8" height="13.8" rx="1" fill="url(#wg)"/><rect x="16" y="0.2" width="14" height="13.8" rx="1" fill="url(#wg)"/><rect x="0.7" y="15.5" width="13.8" height="13.8" rx="1" fill="url(#wg)"/><rect x="16" y="15.5" width="14" height="13.8" rx="1" fill="url(#wg)"/></svg>
<div class="r" style="left:697px;top:1030px;width:144px;height:40px;border-radius:20px;background:#2b2b2b;"></div>
<svg class="s" style="left:724px;top:1041px;" width="19" height="18" viewBox="0 0 19 18"><circle cx="7.5" cy="7.5" r="6" fill="none" stroke="#f2f2f2" stroke-width="1.8"/><path d="M11.8 11.8 L17 17" stroke="#f2f2f2" stroke-width="2"/></svg>
<div class="t" style="left:748.50px;top:1041.30px;font-size:15.00px;line-height:20px;color:#f2f2f2;transform:scaleX(0.9769);">Búsqueda</div>
<svg class="s" style="left:857px;top:1035px;" width="30" height="30" viewBox="0 0 30 30"><g transform="translate(15 15)"><circle r="14.7" fill="#2b9e48"/><path d="M0 0 L12.73 -7.35 A14.7 14.7 0 0 0 -12.73 -7.35 Z" fill="#e3413a"/><path d="M0 0 L12.73 -7.35 A14.7 14.7 0 0 1 0 14.7 Z" fill="#f8c229"/><path d="M-12.73 -7.35 L-6 3.5 L0 0 Z" fill="#2b9e48"/><path d="M12.73 -7.35 L0 -7.35 L0 0 Z" fill="#e3413a"/><path d="M0 14.7 L6.4 3.7 L0 0 Z" fill="#f8c229"/><circle r="6.6" fill="#ffffff"/><circle r="5.3" fill="#3f7ff0"/></g></svg>
<svg class="s" style="left:915px;top:1033px;" width="24" height="33" viewBox="0 0 24 33"><rect x="1" y="3" width="22" height="28.5" rx="1.5" fill="#3ab0df"/><rect x="1" y="29" width="22" height="3" fill="#c46a2a"/><rect x="1" y="27.5" width="22" height="1.6" fill="#e8e8e8"/><g fill="#0e5f8c"><rect x="5" y="10" width="14" height="2"/><rect x="5" y="15" width="14" height="2"/><rect x="5" y="20" width="14" height="2"/></g><g fill="#1b6a95"><circle cx="5" cy="3.5" r="1.6"/><circle cx="10" cy="3.5" r="1.6"/><circle cx="15" cy="3.5" r="1.6"/><circle cx="20" cy="3.5" r="1.6"/></g></svg>
<svg class="s" style="left:966px;top:1034px;" width="31" height="31" viewBox="0 0 31 31"><circle cx="15.5" cy="15.5" r="15.1" fill="#5865f2"/><path d="M9 10.5 C11 9.5 12.5 9.2 13.2 9.2 L13.6 10 C14.8 9.8 16.2 9.8 17.4 10 L17.8 9.2 C18.5 9.2 20 9.5 22 10.5 C23.6 13 24.3 15.8 24 19.5 C22.5 20.7 21 21.3 19.6 21.7 L18.8 20.3 C19.5 20 20 19.7 20.5 19.3 C17.4 20.7 13.6 20.7 10.5 19.3 C11 19.7 11.5 20 12.2 20.3 L11.4 21.7 C10 21.3 8.5 20.7 7 19.5 C6.7 15.8 7.4 13 9 10.5 Z" fill="#ffffff"/><ellipse cx="12.8" cy="16" rx="1.6" ry="1.8" fill="#5865f2"/><ellipse cx="18.2" cy="16" rx="1.6" ry="1.8" fill="#5865f2"/></svg>
<svg class="s" style="left:1022px;top:1035px;" width="30" height="30" viewBox="0 0 30 30"><defs><linearGradient id="stg" x1="0" y1="0" x2="0" y2="1"><stop offset="0" stop-color="#111d36"/><stop offset="0.55" stop-color="#134a7c"/><stop offset="1" stop-color="#1c7fc4"/></linearGradient></defs><circle cx="15" cy="15" r="14.3" fill="url(#stg)"/><circle cx="19.3" cy="10.5" r="4.6" fill="none" stroke="#ffffff" stroke-width="1.8"/><circle cx="19.3" cy="10.5" r="2.4" fill="#ffffff"/><path d="M1 15.5 L10 19 L17 12.5" fill="none" stroke="#ffffff" stroke-width="3"/><circle cx="10.5" cy="20" r="3.6" fill="#ffffff"/><circle cx="10.5" cy="20" r="2" fill="#1a5a90"/></svg>
<svg class="s" style="left:1076px;top:1036px;" width="32" height="29" viewBox="0 0 32 29"><path d="M1 3 Q1 1 3 1 H10 L13 4 H30 Q31 4 31 5 V27.5 H1 Z" fill="#e9b22c"/><rect x="1" y="6" width="30" height="21.5" rx="1" fill="#fbd66a"/><rect x="6" y="20" width="20" height="8" rx="1.5" fill="#1f8fe0"/><rect x="10" y="22.5" width="12" height="1.5" fill="#0c4f8f"/></svg>
<div class="r" style="left:1088px;top:1070px;width:8px;height:3px;background:#9b9b9b;border-radius:2px;"></div>
<svg class="s" style="left:1131px;top:1034px;" width="32" height="32" viewBox="0 0 32 32"><rect x="1" y="1" width="30" height="29.7" rx="1.5" fill="#0f7b10"/><circle cx="15.5" cy="16" r="11.3" fill="#ffffff"/><path d="M6 8.5 C10.5 10.5 13.5 13.5 15.5 16 C17.5 13.5 20.5 10.5 25 8.5 C21 7 18 8.5 15.5 11 C13 8.5 10 7 6 8.5 Z M7.5 25 C9.5 21 12.5 18.5 15.5 16.5 C18.5 18.5 21.5 21 23.5 25 C20.5 22.5 18 21.5 15.5 20.5 C13 21.5 10.5 22.5 7.5 25 Z" fill="#0f7b10"/></svg>
<div class="r" style="left:1148px;top:1029px;width:20px;height:20px;border-radius:50%;background:#aab8bd;"></div>
<div class="t" style="left:1154.00px;top:1031.00px;font-size:13.00px;line-height:17px;color:#1a1a1a;transform:scaleX(0.9676);">1</div>
<svg class="s" style="left:1186px;top:1034px;" width="32" height="32" viewBox="0 0 32 32"><defs><radialGradient id="ffg" cx="0.7" cy="0.15" r="0.95"><stop offset="0" stop-color="#ffe24a"/><stop offset="0.4" stop-color="#ff9a1f"/><stop offset="0.8" stop-color="#ff4a3a"/><stop offset="1" stop-color="#e81e6a"/></radialGradient><radialGradient id="ffp" cx="0.5" cy="0.3" r="0.7"><stop offset="0" stop-color="#9a50f5"/><stop offset="1" stop-color="#5a32c0"/></radialGradient></defs><path d="M16 30.5 C8 30.5 1.5 24 1.5 16.5 C1.5 12 3 9 5 6.5 C5.5 9 6.5 10 7.5 10.5 C9 7 12 5 15 4.5 C17 3.5 19 2 20.5 0.5 C21.5 3 22.5 4 24.5 5 C28 7.5 30.5 12 30.5 16.5 C30.5 24 24 30.5 16 30.5 Z" fill="url(#ffg)"/><circle cx="16.3" cy="15.5" r="5.6" fill="url(#ffp)"/><path d="M4 13 C6 10 10 9 13 10.5 C11.5 11 10.5 12.5 10.5 14 C8 12.5 6 12.5 4 13 Z" fill="#ff8a22"/><path d="M13 8.5 C16 7.5 20 8.5 22 11 C19.5 10 17 10 15 10.5 Z" fill="#ff7a2a"/></svg>
<div class="r" style="left:1237px;top:1025px;width:45px;height:50px;border-radius:5px;background:#262626;box-shadow:inset 0 0 0 1px #2e2e2e;"></div>
<div class="r" style="left:1232px;top:1025px;width:44px;height:50px;border-radius:5px;background:#2b2b2b;box-shadow:inset 0 0 0 1px #353535;"></div>
<svg class="s" style="left:1241px;top:1034px;" width="32" height="32" viewBox="0 0 32 32"><path d="M2 24.5 L6 27 L22 9.5 L22 1.5 Z" fill="#7b52c7"/><path d="M2 10 L6 8.5 L6 27 L2 24.5 Z" fill="#6a45b2"/><path d="M2 10 L6 8.5 L22 23.5 L22 31 Z" fill="#a683ea"/><path d="M22 1.5 L31 6.5 V26 L22 31 Z" fill="#c8a1fa"/><path d="M22 9.5 L22 23.5 L16.5 18.5 Z" fill="#2b2b2b"/></svg>
<div class="r" style="left:1247px;top:1070px;width:20px;height:3.5px;background:#a9c9d2;border-radius:2px;"></div>
<svg class="s" style="left:1651px;top:1045px;" width="15" height="9" viewBox="0 0 15 9"><path d="M1 8 L7.5 1.5 L14 8" fill="none" stroke="#f2f2f2" stroke-width="1.6"/></svg>
<svg class="s" style="left:1687px;top:1041px;" width="22" height="17" viewBox="0 0 22 17"><path d="M1 6 C6.5 0.5 15.5 0.5 21 6" fill="none" stroke="#f2f2f2" stroke-width="1.6"/><path d="M4 9 C8 5 14 5 18 9" fill="none" stroke="#f2f2f2" stroke-width="1.6"/><path d="M7 12 C9.5 9.5 12.5 9.5 15 12" fill="none" stroke="#f2f2f2" stroke-width="1.6"/><circle cx="11" cy="14.5" r="1.6" fill="#f2f2f2"/></svg>
<svg class="s" style="left:1717px;top:1041px;" width="21" height="17" viewBox="0 0 21 17"><path d="M1 5.5 H4 L9 1 V16 L4 11.5 H1 Z" fill="none" stroke="#f2f2f2" stroke-width="1.4" stroke-linejoin="round"/><path d="M12.5 5.5 L19 12 M19 5.5 L12.5 12" stroke="#f2f2f2" stroke-width="1.4"/></svg>
<svg class="s" style="left:1747px;top:1040px;" width="22" height="18" viewBox="0 0 22 18"><rect x="1" y="5" width="17.5" height="11" rx="2" fill="none" stroke="#f2f2f2" stroke-width="1.4"/><rect x="18.5" y="8.5" width="2" height="4" fill="#f2f2f2"/><path d="M2 15 L2 9 L16 8 L16 15 Z" fill="#f2f2f2"/><path d="M4 0.5 L1.5 7 H4.5 L3 11" fill="none" stroke="#f2f2f2" stroke-width="1.2"/></svg>
<div class="t" style="left:1794.00px;top:1030.98px;font-size:14.50px;line-height:19px;color:#f2f2f2;transform:scaleX(0.9787);">09:06 a. m.</div>
<div class="t" style="left:1789.00px;top:1050.98px;font-size:14.50px;line-height:19px;color:#f2f2f2;transform:scaleX(1.0474);">29/05/2024</div>
<div class="r" style="left:1875px;top:1040px;width:20px;height:20px;border-radius:50%;background:#a9bcc3;"></div>
<div class="t" style="left:1882.00px;top:1042.84px;font-size:12.00px;line-height:16px;color:#1a1a1a;transform:scaleX(0.8993);">1</div>
<svg class="s" style="left:75px;top:240px;" width="185" height="140" viewBox="0 0 185 140"><g transform="translate(-75 -240)"><path d="M131 286 C150 286 168 300 169 322 C169.5 336 165 348 158 352 L154 346 L150 352 C145 355 138 356 131 354 Z" fill="#8a6a58" stroke="#5a2d16" stroke-width="1.2"/><path d="M131 288 C146 290 158 302 159.5 322 C160.5 338 154 350 140 355 L131 354 Z" fill="#d2cec9"/><path d="M126 288 C110 295 102.5 310 103 325 C103.5 345 113 358 122.6 370.5 C132 358 143.5 345 145 326 C146 308 139 293 126 288 Z" fill="#7a3a18" stroke="#4a200c" stroke-width="1"/><path d="M107 318 C108 340 116 354 122.6 364 C129 354 140 340 140.5 318" fill="none" stroke="#b89078" stroke-width="2.4"/><path d="M112 305 C112 328 118 342 123 350 C128 342 135 328 135 305" fill="none" stroke="#b89078" stroke-width="2.4"/><path d="M117 300 C117 318 120 328 123 335 C126 328 130 318 130 300" fill="none" stroke="#b89078" stroke-width="1.6"/><ellipse cx="138.5" cy="264" rx="9" ry="5.5" fill="#9a8c80"/><path d="M114 250 C117 256 123 261 130 263.5 L138 268 L146 264 C153 261 159 256 163.5 250.5 C167 262 166.5 274 163 284 L113 284 C109.5 272 110 260 114 250 Z" fill="#6d3a1b" stroke="#ffffff" stroke-width="0.6"/><circle cx="124.5" cy="276.6" r="12.9" fill="#5a2a12"/><circle cx="124.5" cy="276.6" r="11.5" fill="#fa5a12"/><circle cx="150.9" cy="277.4" r="12.9" fill="#5a2a12"/><circle cx="150.9" cy="277.4" r="11.5" fill="#fa5a12"/><path d="M133 286 L137.5 292.5 L142 286 Z" fill="#eeeae6" stroke="#5a2d16" stroke-width="0.7"/><circle cx="125" cy="276.8" r="3.8" fill="#ffffff"/><circle cx="125.3" cy="276.8" r="1.3" fill="#1a1a1a"/><circle cx="150.6" cy="277.3" r="3.8" fill="#ffffff"/><circle cx="150.6" cy="277.3" r="1.3" fill="#1a1a1a"/><text x="84" y="291" font-family="Liberation Sans" font-weight="bold" font-size="40" fill="#f65a1a" stroke="#f65a1a" stroke-width="4" stroke-linejoin="round" textLength="27" lengthAdjust="spacingAndGlyphs">H</text><text x="167.3" y="292" font-family="Liberation Sans" font-weight="bold" font-size="40" fill="#f65a1a" stroke="#f65a1a" stroke-width="3.6" stroke-linejoin="round" textLength="83.5" lengthAdjust="spacingAndGlyphs">TERS</text></g></svg>
</body></html>
